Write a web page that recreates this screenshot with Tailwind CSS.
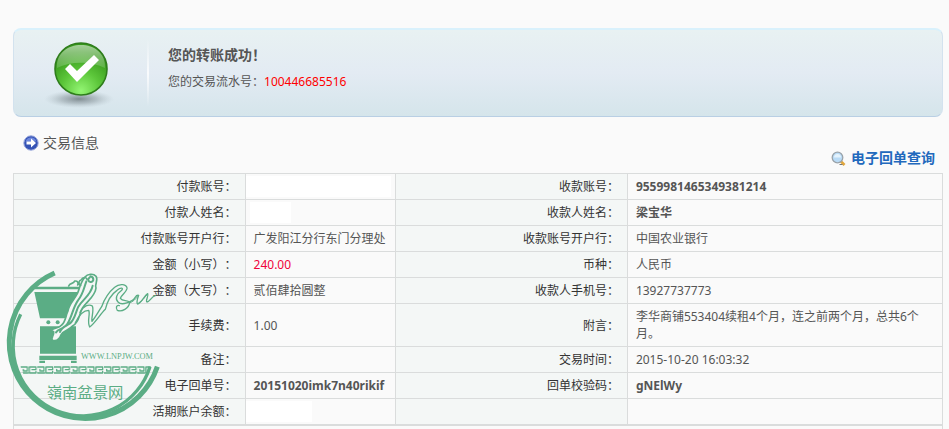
<!DOCTYPE html>
<html lang="zh-CN">
<head>
  <meta charset="UTF-8">
  <meta name="viewport" content="width=device-width, initial-scale=1.0">
  <title>转账成功</title>
  <script src="https://cdn.jsdelivr.net/npm/@tailwindcss/browser@4"></script>
</head>
<body class="bg-[#fafafa] font-['Noto_Sans','Noto_Sans_CJK_SC',sans-serif] text-xs leading-[17px] text-[#555] [text-spacing-trim:space-all]">
  <main class="relative flex min-h-screen flex-col pt-7 pr-[6px] pl-[13px]">

    <!-- Result banner -->
    <section class="flex h-[89px] items-center rounded-lg border border-t-2 border-[#d3e2ee] border-t-[#d9f1fc] border-b-[#b9cfe4] bg-linear-to-b from-[#e8f1f2] via-[#e3ebf3] to-[#d5e5eb]">
      <div class="flex w-[133px] justify-center">
        <svg class="h-[75px] w-20" viewBox="0 0 80 75" aria-hidden="true">
          <defs>
            <radialGradient id="shadow">
              <stop offset="0" stop-color="#6f7b80" stop-opacity=".85"/>
              <stop offset=".5" stop-color="#8a979d" stop-opacity=".5"/>
              <stop offset="1" stop-color="#b0bec5" stop-opacity="0"/>
            </radialGradient>
            <radialGradient id="ball" cx=".5" cy=".92" r=".75">
              <stop offset="0" stop-color="#93f573"/>
              <stop offset=".5" stop-color="#5cc63a"/>
              <stop offset="1" stop-color="#35961a"/>
            </radialGradient>
            <linearGradient id="gloss" x1="0" y1="0" x2="0" y2="1">
              <stop offset="0" stop-color="#fff" stop-opacity=".55"/>
              <stop offset="1" stop-color="#fff" stop-opacity=".15"/>
            </linearGradient>
          </defs>
          <ellipse cx="38" cy="63" rx="35" ry="9" fill="url(#shadow)"/>
          <circle cx="40" cy="33" r="26" fill="url(#ball)" stroke="#2f7d1c" stroke-width="1.6"/>
          <path d="M16 32C15 17 27 9 40 9s25 8 24 23c-12-6-33-8-48 0z" fill="url(#gloss)"/>
          <path d="M24 33l5-5 7 7 17-16 5 5-22 22z" fill="#fff"/>
        </svg>
      </div>
      <div class="h-[68px] w-[2px] bg-linear-to-b from-white/0 via-white/80 to-white/0"></div>
      <div class="pb-3 pl-[19px]">
        <h1 class="text-sm leading-5 font-bold">您的转账成功！</h1>
        <p class="mt-2">您的交易流水号：<span class="text-[#f00]">100446685516</span></p>
      </div>
    </section>

    <header class="flex h-14 justify-between pr-2 pl-[10px]">
      <h2 class="flex items-center gap-1 self-start pt-4 text-sm leading-5">
        <svg class="size-4" viewBox="0 0 16 16" aria-hidden="true">
          <circle cx="8" cy="8" r="7.2" fill="#3553b5" stroke="#9aa8dc"/>
          <path d="M2.5 6.5a5.8 5.8 0 0 1 11 0z" fill="#6d87dc"/>
          <path d="M3.500 6.500h4.500V3.500L13 8l-5 4.500v-3H3.500z" fill="#fff"/>
        </svg>
        交易信息
      </h2>
      <a href="#" class="flex items-center gap-[5px] self-end pb-[5px] text-sm leading-5 font-bold text-[#2269bd]">
        <svg class="size-[15px]" viewBox="0 0 15 15" aria-hidden="true">
          <path d="M9.500 10l4 4" stroke="#e0a63c" stroke-width="2.600"/>
          <path d="M8.500 13.500h3" stroke="#777" stroke-width="1"/>
          <circle cx="6.500" cy="6.500" r="5.300" fill="#b9dbf6" stroke="#9aa3aa" stroke-width="1.300"/>
          <path d="M3 6.500a3.500 3.500 0 0 1 7 0z" fill="#e4f3fd"/>
        </svg>
        电子回单查询
      </a>
    </header>

    <div class="grow border-x border-t border-[#dadcdc]">
      <table class="w-full table-fixed border-collapse [&_td]:border-l [&_td]:border-[#dadcdc] [&_td]:py-1 [&_td]:pr-1 [&_td]:pl-2 [&_td:last-child]:pr-4 [&_th]:border-[#dadcdc] [&_th]:bg-[#f4f7f6] [&_th]:px-2 [&_th]:py-1 [&_th]:text-right [&_th]:font-normal [&_th]:text-[#333] [&_td+th]:border-l [&_tr]:border-b [&_tr]:border-[#dadcdc]">
        <colgroup>
          <col class="w-[24.9%]">
          <col class="w-[16.2%]">
          <col class="w-[25%]">
          <col class="w-[33.9%]">
        </colgroup>
        <tbody>
          <tr>
            <th scope="row">付款账号：</th>
            <td><span class="-my-[2px] -ml-[9px] block h-[21px] w-[146px] bg-white"></span></td>
            <th scope="row">收款账号：</th>
            <td class="font-bold">9559981465349381214</td>
          </tr>
          <tr>
            <th scope="row">付款人姓名：</th>
            <td><span class="-my-[2px] -ml-1 block h-[21px] w-[41px] bg-white"></span></td>
            <th scope="row">收款人姓名：</th>
            <td class="font-bold">梁宝华</td>
          </tr>
          <tr>
            <th scope="row">付款账号开户行：</th>
            <td>广发阳江分行东门分理处</td>
            <th scope="row">收款账号开户行：</th>
            <td>中国农业银行</td>
          </tr>
          <tr>
            <th scope="row">金额（小写）：</th>
            <td class="text-[#f0033c]">240.00</td>
            <th scope="row">币种：</th>
            <td>人民币</td>
          </tr>
          <tr>
            <th scope="row">金额（大写）：</th>
            <td>贰佰肆拾圆整</td>
            <th scope="row">收款人手机号：</th>
            <td>13927737773</td>
          </tr>
          <tr>
            <th scope="row">手续费：</th>
            <td>1.00</td>
            <th scope="row">附言：</th>
            <td>李华商铺553404续租4个月，连之前两个月，总共6个月。</td>
          </tr>
          <tr>
            <th scope="row">备注：</th>
            <td></td>
            <th scope="row">交易时间：</th>
            <td>2015-10-20 16:03:32</td>
          </tr>
          <tr>
            <th scope="row">电子回单号：</th>
            <td class="font-bold">20151020imk7n40rikif</td>
            <th scope="row">回单校验码：</th>
            <td class="font-bold">gNElWy</td>
          </tr>
          <tr>
            <th scope="row">活期账户余额：</th>
            <td><span class="-my-[2px] -ml-2 block h-[21px] w-[66px] bg-white"></span></td>
            <th></th>
            <td></td>
          </tr>
        </tbody>
      </table>
      <div class="border-t border-[#dadcdc]"></div>
    </div>

    <!-- Watermark stamp -->
    <svg class="pointer-events-none absolute bottom-0 left-0 h-[169px] w-[170px]" viewBox="0 0 510 507" fill="none" stroke="#5bad85" stroke-linecap="round" stroke-linejoin="round" role="img" aria-label="嶺南盆景网">
      <defs>
        <pattern id="meander" x="62" y="318" width="50" height="24" patternUnits="userSpaceOnUse">
          <path d="M0 3h20v12H8v-5M0 21h22M26 21V3h20v8H34M26 21h20v-5" stroke="#5bad85" stroke-width="4" fill="none"/>
        </pattern>
      </defs>
      <g stroke-linecap="butt">
        <path d="M164 39A228 228 0 1 0 472 320" stroke-width="15"/>
        <path d="M62 163A210 210 0 1 0 450 320" stroke-width="10"/>
      </g>
      <g fill="#5bad85" stroke="none">
        <path d="M98 80h150v8H96zM103 96h139l-20 79H120zM120 199h108v82H120zM118 287h112v13H118zM118 302h17v7h-17zM213 302h17v7h-17z"/>
        <circle cx="145" cy="187" r="6"/>
        <circle cx="173" cy="187" r="6"/>
      </g>
      <!-- trunk -->
      <path d="M255 51C262 42 280 39 288 49C296 60 283 72 288 84C286 108 263 122 248 143C235 167 239 184 219 197C207 211 191 211 184 223C179 236 170 245 158 241C151 235 163 226 161 215L153 211C165 201 176 207 184 196C198 185 196 169 204 153C207 131 224 119 233 99C239 84 241 68 255 51z" fill="#f4f7f6" stroke-width="5"/>
      <path d="M271 49c11 2 12 15 2 17c-9 1-11-10-4-13M259 64c-8 22-10 39-25 57c-16 23-17 47-31 69c-9 18-27 15-35 27M278 77c-5 28-29 40-43 63c-9 18-10 39-26 51c-12 8-24 9-29 25" stroke-width="6"/>
      <path d="M242 76c-8-3-6-14 2-17c5-10 16-7 17-1M206 78c4-11 15-5 18-15c9-1 12 5 9 12" stroke-width="5"/>
      <!-- branch -->
      <path d="M226 188C239 161 255 151 266 151C272 162 260 183 269 201C285 190 300 163 316 148C322 123 335 102 351 91C364 80 371 84 365 91C350 102 344 116 354 126C365 138 388 126 397 121C407 116 406 103 416 106C411 119 409 132 414 132C426 126 433 107 443 101C447 109 435 122 441 126C449 126 454 110 466 107" stroke-width="4"/>
      <path d="M240 157C249 138 267 131 277 138C283 151 273 173 276 184C286 172 295 155 305 140C313 118 326 97 344 82C358 69 383 72 381 86C378 98 366 103 361 115C369 126 383 118 389 128C386 146 366 156 352 151C346 143 350 134 358 137" stroke-width="4"/>
      <path d="M388 129c13-4 19-13 25-19M416 129c11-6 18-17 25-25" stroke-width="3"/>
      <path d="M60 318h393l-12 24H70z" fill="url(#meander)" stroke="none"/>
      <g fill="#5bad85" stroke="none">
        <text x="243" y="298" font-family="Liberation Serif, serif" font-size="25">WWW.LNPJW.COM</text>
        <text x="140" y="414" font-family="Noto Sans CJK TC, sans-serif" font-size="46">嶺南盆景网</text>
      </g>
    </svg>
  </main>
</body>
</html>
